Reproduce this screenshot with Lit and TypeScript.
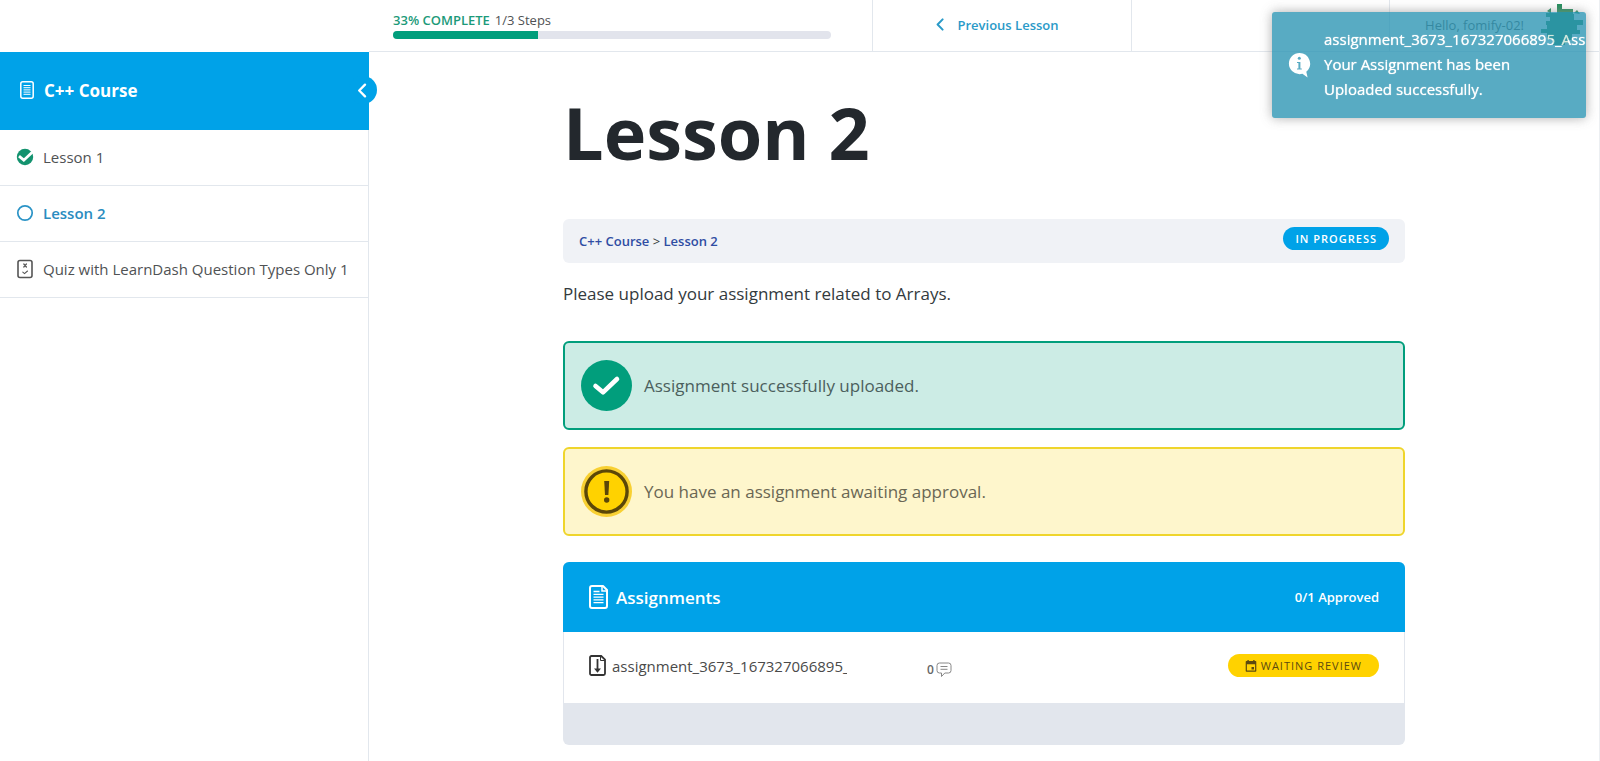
import { LitElement, html, css } from "lit";
import { customElement, property } from "lit/decorators.js";

type LessonState = "done" | "current" | "quiz";

interface Step {
  title: string;
  state: LessonState;
}

const STEPS: Step[] = [
  { title: "Lesson 1", state: "done" },
  { title: "Lesson 2", state: "current" },
  { title: "Quiz with LearnDash Question Types Only 1", state: "quiz" },
];

const stepIcon = (state: LessonState) => {
  if (state === "done") {
    return html`<svg width="18" height="18" viewBox="0 0 18 18" aria-hidden="true">
      <circle cx="9" cy="9" r="8.2" fill="#14936f" />
      <path d="M3 8.200 7.800 12.200 16.500 4" fill="none" stroke="#fff" stroke-width="2.800" />
    </svg>`;
  }
  if (state === "current") {
    return html`<svg width="18" height="18" viewBox="0 0 18 18" aria-hidden="true">
      <circle cx="9" cy="9" r="7.2" fill="none" stroke="#2a93c6" stroke-width="1.7" />
    </svg>`;
  }
  return html`<svg width="18" height="20" viewBox="0 0 18 20" aria-hidden="true" fill="none" stroke="#555" stroke-linecap="round">
    <rect x="2" y="1.5" width="14" height="17" rx="2" stroke-width="1.6" />
    <path d="M7.8 5l2.6 3M10.4 5l-2.600 3" stroke-width="1.2" />
    <path d="M6.800 13.200l1.700 1.400 3-2.600" stroke-width="1.1" />
  </svg>`;
};

const chevron = (width: number, height: number, stroke: number) => html`
  <svg width=${width} height=${height} viewBox="0 0 8 13" aria-hidden="true" fill="none"
    stroke="currentColor" stroke-width=${stroke} stroke-linecap="round" stroke-linejoin="round">
    <path d="M6.6 1.4 1.6 6.5l5 5.1" />
  </svg>`;

@customElement("course-sidebar")
class CourseSidebar extends LitElement {
  static styles = css`
    :host { display: block; }
    .head {
      position: relative;
      display: flex;
      align-items: center;
      gap: 10px;
      height: 78px;
      margin-right: -1px;
      padding: 0 20px 2px;
      background: #00a2e8;
      color: #fff;
      font-size: 17px;
      font-weight: 700;
      box-sizing: border-box;
    }
    .title { color: inherit; text-decoration: none; }
    .toggle {
      position: absolute;
      top: 24px;
      right: -8px;
      display: flex;
      align-items: center;
      justify-content: center;
      width: 28px;
      height: 28px;
      padding: 0 2px 0 0;
      border: 0;
      border-radius: 50%;
      background: #00a2e8;
      color: #fff;
    }
    .steps { margin: 0; padding: 0; list-style: none; }
    .step { border-bottom: 1px solid #e2e7ed; }
    .link {
      display: flex;
      align-items: center;
      gap: 9px;
      height: 55px;
      padding: 0 16px 2px;
      box-sizing: border-box;
      color: #4f5254;
      font-size: 15px;
      text-decoration: none;
      white-space: nowrap;
    }
    .current { color: #2a8cc0; font-weight: 600; }
  `;

  render() {
    return html`
      <div class="head">
        <svg width="14" height="18" viewBox="0 0 14 18" aria-hidden="true" fill="none" stroke="#fff">
          <rect x=".8" y=".8" width="12.4" height="16.4" rx="2" stroke-width="1.5" />
          <path d="M3.5 4.5h7M3.5 6.7h7M3.5 8.9h7M3.5 11.1h7M3.5 13.3h7" />
        </svg>
        <a class="title" href="#course">C++ Course</a>
        <button class="toggle" aria-label="Collapse sidebar">${chevron(10, 15, 2)}</button>
      </div>
      <ul class="steps">
        ${STEPS.map(
          (s) => html`<li class="step">
            <a class="link ${s.state}" href="#step">${stepIcon(s.state)}<span>${s.title}</span></a>
          </li>`
        )}
      </ul>
    `;
  }
}

@customElement("course-alert")
class CourseAlert extends LitElement {
  @property() kind: "success" | "warning" = "success";

  static styles = css`
    :host { display: block; }
    .box {
      display: flex;
      align-items: center;
      gap: 12px;
      padding: 17px 16px;
      border: 2px solid #019e7c;
      border-radius: 6px;
      background: #ccece5;
      color: #4b5f5d;
      font-size: 17px;
      line-height: 24px;
    }
    .warning {
      border-color: #efd52c;
      background: #fef6cc;
      color: #6a6754;
    }
    .icon { display: block; flex: none; }
  `;

  render() {
    const icon =
      this.kind === "success"
        ? html`<svg class="icon" width="51" height="51" viewBox="0 0 51 51" aria-hidden="true">
            <circle cx="25.5" cy="25.5" r="25.5" fill="#019e7c" />
            <path d="M14.500 26l7.500 6.300 14-13.300" fill="none" stroke="#fff" stroke-width="4.6" stroke-linecap="round" stroke-linejoin="round" />
          </svg>`
        : html`<svg class="icon" width="51" height="51" viewBox="0 0 51 51" aria-hidden="true">
            <circle cx="25.5" cy="25.5" r="25.5" fill="#f8d032" />
            <circle cx="25.5" cy="25.5" r="20.6" fill="#ffd200" stroke="#5b4708" stroke-width="3.4" />
            <path d="M23.2 15h5l-.8 14h-3.4z" fill="#5b4708" />
            <circle cx="25.7" cy="34" r="2.7" fill="#5b4708" />
          </svg>`;
    return html`<div class="box ${this.kind}" role="status">${icon}<slot></slot></div>`;
  }
}

@customElement("upload-toast")
class UploadToast extends LitElement {
  static styles = css`
    :host { display: block; }
    .toast {
      display: flex;
      align-items: center;
      gap: 13px;
      padding: 15px 0 16px 16px;
      overflow: hidden;
      border-radius: 3px;
      background: #2f96b4;
      box-shadow: 0 0 12px #999;
      color: #fff;
      font-size: 15px;
      line-height: 25px;
      text-shadow: 0 0 1px #fff;
      opacity: 0.8;
    }
    .icon { flex: none; }
    .title { white-space: nowrap; }
    .message { max-width: 200px; }
  `;

  render() {
    return html`
      <div class="toast" role="alert">
        <svg class="icon" width="23" height="26" viewBox="0 0 23 26" aria-hidden="true">
          <path d="M11.5 1a10.600 10.600 0 0 0 0 21.200c1 0 2-.1 2.900-.4l5.200 3.700-1.300-5.800A10.600 10.600 0 0 0 11.500 1z" fill="#fff" />
          <circle cx="11.300" cy="6.300" r="1.500" fill="#2f96b4" />
          <path d="M9 10h3.400v6.600h1.400v1H9v-1h1.400V11H9z" fill="#2f96b4" />
        </svg>
        <div>
          <div class="title">assignment_3673_167327066895_Ass</div>
          <div class="message">Your Assignment has been Uploaded successfully.</div>
        </div>
      </div>
    `;
  }
}

@customElement("app-root")
class AppRoot extends LitElement {
  @property({ type: Number }) completed = 33;

  static styles = css`
    :host {
      display: block;
      font-family: "Open Sans", "Noto Sans", sans-serif;
      color: #333a3d;
      background: #fff;
    }
    .page {
      display: grid;
      grid-template-columns: 369px minmax(0, 1fr);
      grid-template-rows: auto 1fr;
      min-height: 100vh;
      box-sizing: border-box;
      border-right: 1px solid #eceff2;
    }
    .topbar {
      display: grid;
      grid-template-columns: 503fr 259fr 258fr 210fr;
      height: 51px;
      border-bottom: 1px solid #e2e7ed;
    }
    .progress {
      display: flex;
      flex-direction: column;
      justify-content: center;
      gap: 2px;
      padding: 0 41px 2px 24px;
    }
    .progress-text { font-size: 13px; line-height: 18px; color: #4f5254; }
    .percent { margin-right: 5px; color: #1c9a79; font-weight: 600; }
    .track {
      height: 8px;
      overflow: hidden;
      border-radius: 4px;
      background: #e2e4ec;
    }
    .fill { height: 100%; background: #019e7c; }
    .cell {
      display: flex;
      align-items: center;
      justify-content: center;
      gap: 14px;
      padding: 0 10px 2px 0;
      border-left: 1px solid #e2e7ed;
      color: #2a9ac8;
      font-size: 13px;
      font-weight: 600;
      text-decoration: none;
    }
    .user {
      justify-content: flex-end;
      gap: 17px;
      padding-right: 16px;
      color: #4f5254;
      font-weight: 400;
    }
    .side { border-right: 1px solid #e2e7ed; }
    .main { padding: 0 24px; }
    .content { max-width: 842px; margin: 0 auto; }
    .heading {
      margin: 0;
      padding: 32px 0 38px;
      color: #23282d;
      font-size: 72px;
      font-weight: 700;
      line-height: 97px;
    }
    .crumbs {
      display: flex;
      align-items: flex-start;
      justify-content: space-between;
      padding: 8px 16px 12px;
      border-radius: 6px;
      background: #f0f2f6;
    }
    .trail { padding-top: 5px; font-size: 13px; line-height: 19px; }
    .crumb { color: #2f4da3; font-weight: 600; text-decoration: none; }
    .pill {
      display: flex;
      align-items: center;
      gap: 4px;
      height: 23px;
      padding: 0 12px;
      border-radius: 12px;
      background: #00a2e8;
      color: #fff;
      font-size: 11px;
      font-weight: 600;
      letter-spacing: 1px;
      text-transform: uppercase;
    }
    .waiting { padding: 0 17px; background: #ffd200; color: #5b4a10; font-weight: 500; }
    .intro { margin: 0; padding: 16px 0 32px; font-size: 17px; line-height: 30px; }
    .alerts { display: grid; gap: 17px; margin-bottom: 26px; }
    .card { overflow: hidden; border-radius: 6px; background: #e2e6ed; }
    .card-head {
      display: flex;
      align-items: center;
      gap: 8px;
      height: 70px;
      padding: 0 26px;
      background: #00a2e8;
      color: #fff;
    }
    .card-title { margin: 0; flex: 1; font-size: 17px; font-weight: 600; }
    .approved { font-size: 13px; font-weight: 600; }
    .row {
      display: grid;
      grid-template-columns: 258px minmax(0, 1fr) auto;
      align-items: center;
      height: 71px;
      margin: 0 1px;
      padding: 0 25px 4px;
      box-sizing: border-box;
      background: #fff;
    }
    .file { display: flex; align-items: center; gap: 6px; min-width: 0; color: #4a4a4a; font-size: 15px; text-decoration: none; }
    .file-icon { flex: none; }
    .file-name { overflow: hidden; white-space: nowrap; }
    .comments {
      display: flex;
      align-items: center;
      gap: 2px;
      padding: 8px 0 0 80px;
      color: #666;
      font-size: 12px;
      font-weight: 600;
      text-decoration: none;
    }
    .card-foot { height: 42px; }
    .toast-slot { position: fixed; top: 12px; right: 14px; width: 314px; z-index: 10; }
  `;

  render() {
    return html`
      <div class="page">
        <div></div>
        <header class="topbar">
          <div class="progress">
            <div class="progress-text"><span class="percent">${this.completed}% COMPLETE</span>1/3 Steps</div>
            <div class="track" role="progressbar" aria-label="Course progress" aria-valuenow=${this.completed}>
              <div class="fill" style="width:${this.completed}%"></div>
            </div>
          </div>
          <a class="cell" href="#previous">${chevron(8, 13, 2)}Previous Lesson</a>
          <div class="cell"></div>
          <div class="cell user">
            <span>Hello, fomify-02!</span>
            <svg width="42" height="42" viewBox="0 0 42 42" fill="#208c5a" aria-hidden="true">
              <path d="M16 0h5v5h11v5h1v6h9v5h-6v5h3v4h-8v6h-4v3h-3v2H12v-6H6v-6H0v-4h6v-4h-1v-4h4v-4h-4V9h11z" />
              <path d="M6 7l4-3v5H9zM33 9l3-3 3 4z" />
            </svg>
          </div>
        </header>
        <aside class="side"><course-sidebar></course-sidebar></aside>
        <main class="main">
          <div class="content">
            <h1 class="heading">Lesson 2</h1>
            <div class="crumbs">
              <nav class="trail" aria-label="Breadcrumb">
                <a class="crumb" href="#course">C++ Course</a> &gt; <a class="crumb" href="#lesson">Lesson 2</a>
              </nav>
              <span class="pill">In Progress</span>
            </div>
            <p class="intro">Please upload your assignment related to Arrays.</p>
            <div class="alerts">
              <course-alert kind="success">Assignment successfully uploaded.</course-alert>
              <course-alert kind="warning">You have an assignment awaiting approval.</course-alert>
            </div>
            <section class="card">
              <div class="card-head">
                <svg width="19" height="24" viewBox="0 0 19 24" aria-hidden="true" fill="none" stroke="#fff">
                  <path d="M3 1h11l4 4v16a2 2 0 0 1-2 2H3a2 2 0 0 1-2-2V3a2 2 0 0 1 2-2z" stroke-width="2" stroke-linejoin="round" />
                  <path d="M13 1.500V6h4.500" stroke-width="1.500" />
                  <path d="M4.500 6.500h6M4.500 9.300h10M4.500 12.100h10M4.500 14.900h10M4.500 17.700h10" stroke-width="1.300" />
                </svg>
                <h2 class="card-title">Assignments</h2>
                <span class="approved">0/1 Approved</span>
              </div>
              <div class="row">
                <a class="file" href="#file">
                  <svg class="file-icon" width="17" height="21" viewBox="0 0 17 21" aria-hidden="true" fill="none" stroke="#333">
                    <path d="M2.500 1h9.700L16 4.600V18.500a1.500 1.500 0 0 1-1.500 1.500h-12A1.500 1.500 0 0 1 1 18.500v-16A1.500 1.500 0 0 1 2.500 1z" stroke-width="1.800" />
                    <path d="M11.500 1.500v4h4" stroke-width="1" />
                    <path d="M8.500 4v11" stroke-width="1.800" />
                    <path d="M5 13.500h7l-3.500 4.200z" fill="#333" stroke="none" />
                  </svg>
                  <span class="file-name">assignment_3673_167327066895_A</span>
                </a>
                <a class="comments" href="#comments" aria-label="0 comments">
                  0
                  <svg width="16" height="16" viewBox="0 0 16 16" aria-hidden="true" fill="none" stroke="#888">
                    <path d="M3.500 1h9A2.500 2.500 0 0 1 15 3.500v5a2.500 2.500 0 0 1-2.500 2.500H8.800L5.500 14.500V11h-2A2.500 2.500 0 0 1 1 8.500v-5A2.500 2.500 0 0 1 3.500 1z" stroke-linejoin="round" />
                    <path d="M4.500 4.500h7M4.500 7.300h7" />
                  </svg>
                </a>
                <span class="pill waiting">
                  <svg width="12" height="12" viewBox="0 0 12 12" aria-hidden="true">
                    <path d="M1.500 1h9a.8.8 0 0 1 .8.800V11a.8.8 0 0 1-.8.800h-9A.8.8 0 0 1 .7 11V1.800A.8.8 0 0 1 1.500 1zM1.900 4.300v6.300h8.200V4.300z" fill="#5b4a10" fill-rule="evenodd" />
                    <path d="M2.400 0h1.400v1.500H2.400zM8.200 0h1.400v1.500H8.200zM6.500 7h2.500v2.500H6.500z" fill="#5b4a10" />
                  </svg>
                  Waiting Review
                </span>
              </div>
              <div class="card-foot"></div>
            </section>
          </div>
        </main>
        <upload-toast class="toast-slot"></upload-toast>
      </div>
    `;
  }
}
